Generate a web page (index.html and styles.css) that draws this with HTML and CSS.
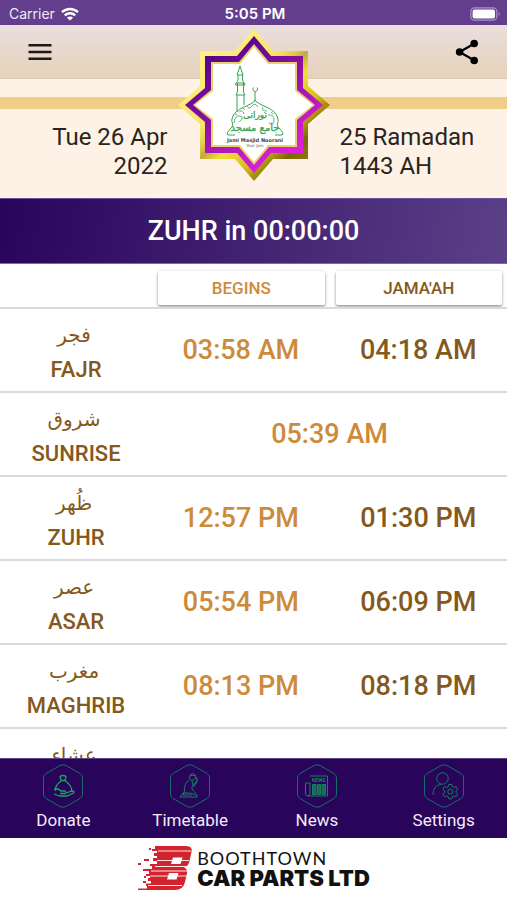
FILE: index.html
```html
<!DOCTYPE html>
<html lang="en">
<head>
<meta charset="utf-8">
<meta name="viewport" content="width=device-width, initial-scale=1">
<title>Jami Masjid Noorani</title>
<link rel="stylesheet" href="styles.css">
</head>
<body>
<div class="status">
  <div class="carrier"><span>Carrier</span>
    <svg width="18" height="14" viewBox="0 0 18 14" fill="none" stroke="#fff" stroke-width="2.4"><path d="M1 5.2a11.5 11.500 0 0 1 16 0M3.800 8.400a7.400 7.400 0 0 1 10.400 0"/><path d="M9 13.600 5.900 10.800a4.400 4.400 0 0 1 6.200 0Z" fill="#fff" stroke="none"/></svg>
  </div>
  <div class="clock">5:05 PM</div>
  <div class="battery">
    <svg width="31" height="14" viewBox="0 0 31 14"><rect x=".8" y=".8" width="26" height="12.4" rx="3.6" fill="none" stroke="#a893c8" stroke-width="1.2"/><rect x="2.600" y="2.600" width="22.400" height="8.800" rx="2" fill="#fff"/><path d="M28.600 5v4c1.500-.6 1.500-3.400 0-4Z" fill="#a893c8"/></svg>
  </div>
</div>

<header class="header">
  <div class="toolbar">
    <button class="icon-btn" aria-label="Menu"><svg width="24" height="18" viewBox="0 0 24 18" stroke="#1d1814" stroke-width="2.500"><path d="M.5 2.200h23M.5 9h23M.5 15.800h23"/></svg></button>
    <button class="icon-btn" aria-label="Share"><svg width="24" height="26" viewBox="0 0 24 26"><path d="M19.500 4.500 4.500 13l15 8.500" fill="none" stroke="#000" stroke-width="2.200"/><circle cx="19.200" cy="4.500" r="3.800"/><circle cx="4.600" cy="13" r="3.800"/><circle cx="19.200" cy="21.500" r="3.800"/></svg></button>
  </div>
  <div class="stripe"></div>
  <div class="dates">
    <p class="date gregorian">Tue 26 Apr<br>2022</p>
    <p class="date hijri">25 Ramadan<br>1443 AH</p>
  </div>
  <svg class="logo" viewBox="0 0 154 154" role="img" aria-label="Jami Masjid Noorani">
    <defs>
      <linearGradient id="gold" x1="0" y1="0" x2="1" y2="1">
        <stop offset="0.150" stop-color="#fff08a"/><stop offset="0.400" stop-color="#f8e764"/><stop offset="0.460" stop-color="#e3cc45"/><stop offset="0.500" stop-color="#c3aa3c"/><stop offset="0.560" stop-color="#f0df3c"/><stop offset="0.680" stop-color="#d8bd1c"/><stop offset="0.780" stop-color="#806606"/><stop offset="0.860" stop-color="#8d7610"/>
      </linearGradient>
      <linearGradient id="purple" x1="0.200" y1="0.100" x2="0.700" y2="0.900">
        <stop offset="0" stop-color="#53048a"/><stop offset="0.450" stop-color="#8a10a4"/><stop offset="1" stop-color="#e01fdd"/>
      </linearGradient>
    </defs>
    <path fill="url(#gold)" d="M77 1 96 23H131V58L153 77 131 96V131H96L77 153 58 131H23V96L1 77 23 58V23H58Z"/>
    <path fill="url(#purple)" d="M77 8 94 28H126V60L146 77 126 94V125H94L77 145 60 125H28V94L8 77 28 60V28H60Z"/>
    <path fill="#e8d36b" d="M77 16 92 34H120V62L138 77 120 92V119H92L77 137 62 119H34V92L16 77 34 62V34H62Z"/>
    <path fill="#fff" d="M77 19 91 36H118V63L136 77 118 91V117H91L77 134 63 117H36V91L18 77 36 63V36H63Z"/>
    <g fill="none" stroke="#36a352">
      <path d="M63 38 60 47H66ZM61 47V52L59.500 55H67L65.500 52V47M60.500 55V64L59 67H68L66.500 64V55M60 67V84M67 67V77M59 55 58.500 57H68L67.500 55"/>
      <path d="M78 73V64M76.500 59.500A2.400 2.400 0 1 0 80 59.500"/>
      <path d="M78 72C76 78 57 79 55 91C54 94 57 96 55 99Q48 106 51 107H58M78 72C81 78 99 79 101 91C102 94 99 96 101 99Q108 106 105 107H98"/>
      <path stroke-width=".8" d="M57 95q1-8 6-7t-1 6M62 84q4-3 5 2M70 78q2 4 5 0t6 1M86 79q-2 4 4 4M91 87q6-1 6 5t-5 3M58 86l2 1M94 84l2 2M66 80l2 2M87 84l2 2"/>
    </g>
    <text class="logo-script logo-script-top" x="78" y="90" text-anchor="middle">نورانی</text>
    <text class="logo-script" x="78" y="103" text-anchor="middle">جامع مسجد</text>
    <text class="logo-name" x="78" y="114" text-anchor="middle">Jami Masjid Noorani</text>
    <text class="logo-sub" x="78" y="119" text-anchor="middle">Your Jam</text>
  </svg>
</header>

<section class="countdown">ZUHR in 00:00:00</section>

<main class="times">
  <table>
    <thead><tr><td></td><th scope="col"><span class="head begins">BEGINS</span></th><th scope="col"><span class="head">JAMA'AH</span></th></tr></thead>
    <tbody>
      <tr><th scope="row"><span class="arabic" lang="ar">فجر</span><span class="name">FAJR</span></th><td class="begins">03:58 AM</td><td>04:18 AM</td></tr>
      <tr><th scope="row"><span class="arabic" lang="ar">شروق</span><span class="name">SUNRISE</span></th><td class="begins" colspan="2">05:39 AM</td></tr>
      <tr><th scope="row"><span class="arabic" lang="ar">ظُهر</span><span class="name">ZUHR</span></th><td class="begins">12:57 PM</td><td>01:30 PM</td></tr>
      <tr><th scope="row"><span class="arabic" lang="ar">عصر</span><span class="name">ASAR</span></th><td class="begins">05:54 PM</td><td>06:09 PM</td></tr>
      <tr><th scope="row"><span class="arabic" lang="ar">مغرب</span><span class="name">MAGHRIB</span></th><td class="begins">08:13 PM</td><td>08:18 PM</td></tr>
      <tr><th scope="row"><span class="arabic" lang="ar">عشاء</span></th><td></td><td></td></tr>
    </tbody>
  </table>
</main>

<nav class="tabs">
  <a href="#donate"><svg viewBox="0 0 42 46"><path class="hex" d="M18 2.500Q21 1 24 2.500L38 10.500Q40.500 12 40.500 15V31Q40.500 34 38 35.500L24 43.500Q21 45 18 43.500L4 35.500Q1.500 34 1.500 31V15Q1.500 12 4 10.500Z"/><g class="bright"><path d="M18 13.500q3-2 6 0l-1 4h-4zM18.500 17.500h5.500M19 18c-4 3-6 7-5.500 10M23.500 18c4 3 7 7 6 11M12 26q4-1 7 2h4q2 1 0 2.500h-5M24 30l6-2q3 0 1.500 2L25 33H18l-6-2"/></g></svg><span>Donate</span></a>
  <a href="#timetable"><svg viewBox="0 0 42 46"><path class="hex" d="M18 2.500Q21 1 24 2.500L38 10.500Q40.500 12 40.500 15V31Q40.500 34 38 35.500L24 43.500Q21 45 18 43.500L4 35.500Q1.500 34 1.500 31V15Q1.500 12 4 10.500Z"/><path d="M20.500 15q0-4 3-4.500 3.500 0 3 4-1 3-3.500 3-2-.5-2.500-2.500M21 12.500h5M20.500 17c-4 2-5 6-5 10l-1 5M23 18l1 4 4-4-.5-4M24 22c-2 3-1 5 3 8M28.500 18l-4 6M11 34l3-4h6l8 2v2ZM14 32h9M27 14l1.500 3"/></svg><span>Timetable</span></a>
  <a href="#news"><svg viewBox="0 0 42 46"><path class="hex" d="M18 2.500Q21 1 24 2.500L38 10.500Q40.500 12 40.500 15V31Q40.500 34 38 35.500L24 43.500Q21 45 18 43.500L4 35.500Q1.500 34 1.500 31V15Q1.500 12 4 10.500Z"/><path d="M14 13H31.500V33H12Q9.500 33 9.500 30V20H14V31Q14 33 12 33"/><path class="fill" d="M16.500 21.500h3.500v10h-3.500zM21.500 21.500h3v10h-3zM26 21.500h3.500v10h-3.500z"/><text class="paper" x="22.800" y="18.500" text-anchor="middle">NEWS</text></svg><span>News</span></a>
  <a href="#settings"><svg viewBox="0 0 42 46"><path class="hex" d="M18 2.500Q21 1 24 2.500L38 10.500Q40.500 12 40.500 15V31Q40.500 34 38 35.500L24 43.500Q21 45 18 43.500L4 35.500Q1.500 34 1.500 31V15Q1.500 12 4 10.500Z"/><circle cx="19.500" cy="15.500" r="5.700"/><path d="M10 32Q10 22 18 21.500M25.800 21.500h3l.6 2.200 1.800.7 2-.8 1.500 2.600-1.600 1.500v2l1.600 1.500-1.500 2.400-2-.7-1.800.8-.6 2.100h-3l-.6-2.100-1.800-.8-2 .7-1.500-2.400 1.600-1.500v-2l-1.600-1.500 1.500-2.600 2 .8 1.800-.7z"/><circle cx="27.300" cy="28.700" r="2.500"/></svg><span>Settings</span></a>
</nav>

<footer class="sponsor">
  <svg width="56" height="46" viewBox="0 0 56 46"><path fill="#d3232e" d="M18 1H49Q56 1 54.500 7L52.500 16Q51.500 21 47 22.500Q51 24 50 28L48 37Q46 45 38 45H1V43.500H10V41H9V38.500H14V36H11V33H13V31H9V29H12V26H6V24H15V21H13V19H20V16H16V13H20V11H17V8H20V6H15V4H18Z"/><path fill="#fff" d="M36 12.500h9.500l-2 6.500h-9.500zM32 28h9.500l-2 6.500H30z"/><path stroke="#fff" stroke-width=".9" fill="none" d="M21 6H54M20 15.500H35M44 15.500H52M18 21.500H49M14 26H50M13 31H31M40 31H49M11 40.500H45"/><path fill="#d3232e" d="M12 3h2v2h-2zM1 18h3v2H1zM7 14h5v2H7zM7 31h2v2H7zM6 36h3v2H6z"/></svg>
  <div class="brand"><span class="brand-top">BOOTHTOWN</span><span class="brand-main">CAR PARTS LTD</span></div>
</footer>
</body>
</html>
```
FILE: styles.css
```css
* { box-sizing: border-box; }
body {
  margin: 0;
  height: 100vh;
  display: flex;
  flex-direction: column;
  overflow: hidden;
  background: #fff;
  font-family: Roboto, "DejaVu Sans", sans-serif;
}
.status {
  flex: none;
  height: 25px;
  padding: 2px 6px 0 9px;
  display: grid;
  grid-template-columns: 1fr auto 1fr;
  align-items: center;
  background: #633e8c;
  color: #fff;
  font-family: Inter, sans-serif;
  font-size: 14px;
}
.carrier { display: flex; align-items: center; gap: 6px; color: #eee8f5; }
.clock { font-size: 15px; line-height: 20px; font-weight: 600; }
.battery { display: flex; justify-content: flex-end; }
.header { flex: none; position: relative; background: #fdf2e5; }
.toolbar {
  height: 54px;
  padding: 0 26px;
  display: flex;
  align-items: center;
  justify-content: space-between;
  background: linear-gradient(#eadedd, #e6d2bb);
  border-bottom: 1px solid #ddcbb8;
}
.icon-btn { display: flex; padding: 2px; border: 0; background: none; }
.stripe { height: 12px; margin-top: 18px; background: #f1cd87; }
.dates {
  height: 89px;
  padding-top: 14px;
  display: grid;
  grid-template-columns: 1fr 1fr;
  column-gap: 172px;
}
.date { margin: 0; font-size: 24px; line-height: 29px; color: #2a241d; white-space: nowrap; }
.gregorian { text-align: right; }
.logo { position: absolute; top: 3px; left: 50%; width: 154px; height: 154px; transform: translateX(-50%); }
.logo-script { font: 10px "DejaVu Sans", sans-serif; fill: #36a352; stroke: #36a352; stroke-width: .3; }
.logo-script-top { font-size: 9px; }
.logo-name { font: bold 5px "DejaVu Sans", sans-serif; fill: #444; }
.logo-sub { font: 4px "DejaVu Sans", sans-serif; fill: #555; }
.countdown {
  flex: none;
  height: 66px;
  display: flex;
  align-items: center;
  justify-content: center;
  background: linear-gradient(100deg, #29045b, #5b4088);
  border-top: 1px solid #6a5299;
  border-bottom: 1px solid #7e69a6;
  color: #fff;
  font-size: 27px;
  font-weight: 500;
}
.times { flex: 1; min-height: 0; overflow: hidden; }
table { width: 100%; table-layout: fixed; border-collapse: collapse; color: #85581b; }
thead td { width: 30%; }
thead th { width: 35%; height: 44px; padding: 4px 5px 0 6px; font-weight: 500; }
.head {
  display: block;
  font-size: 17px;
  line-height: 34px;
  border-radius: 2px;
  box-shadow: 0 2px 3px rgba(0, 0, 0, .35), 0 0 3px rgba(0, 0, 0, .15);
}
.begins { color: #cd8a3a; }
tbody tr { height: 84px; border-top: 2px solid #dadada; }
tbody th, tbody td { padding: 0; text-align: center; font-weight: 500; }
tbody th { padding-top: 8px; vertical-align: top; }
tbody td { font-size: 27px; }
.arabic { display: block; padding-right: 4px; font: 20px/36px "DejaVu Sans", sans-serif; }
.name { display: block; font-size: 22px; line-height: 34px; }
.tabs {
  flex: none;
  height: 80px;
  display: grid;
  grid-template-columns: repeat(4, 1fr);
  background: #29045b;
  border-top: 1px solid #5e4686;
}
.tabs a {
  display: flex;
  flex-direction: column;
  align-items: center;
  padding-top: 4px;
  color: #f4ebf8;
  font-size: 17px;
  line-height: 22px;
  text-decoration: none;
}
.tabs svg { width: 42px; height: 46px; fill: none; stroke: #17805f; stroke-width: 1; }
.tabs .hex { stroke: #176e62; }
.tabs .bright { stroke: #15a663; stroke-width: 1.3; }
.tabs .fill { fill: #17675f; }
.tabs .paper { font: bold 5px Roboto, sans-serif; fill: #17805f; stroke: none; }
.sponsor { flex: none; height: 62px; padding-bottom: 2px; display: flex; align-items: center; justify-content: center; gap: 4px; }
.brand { display: flex; flex-direction: column; color: #111; }
.brand-top { font: 18px/20px Lato, sans-serif; letter-spacing: 1px; }
.brand-main { font: 900 22px/20px Inter, sans-serif; }
```
